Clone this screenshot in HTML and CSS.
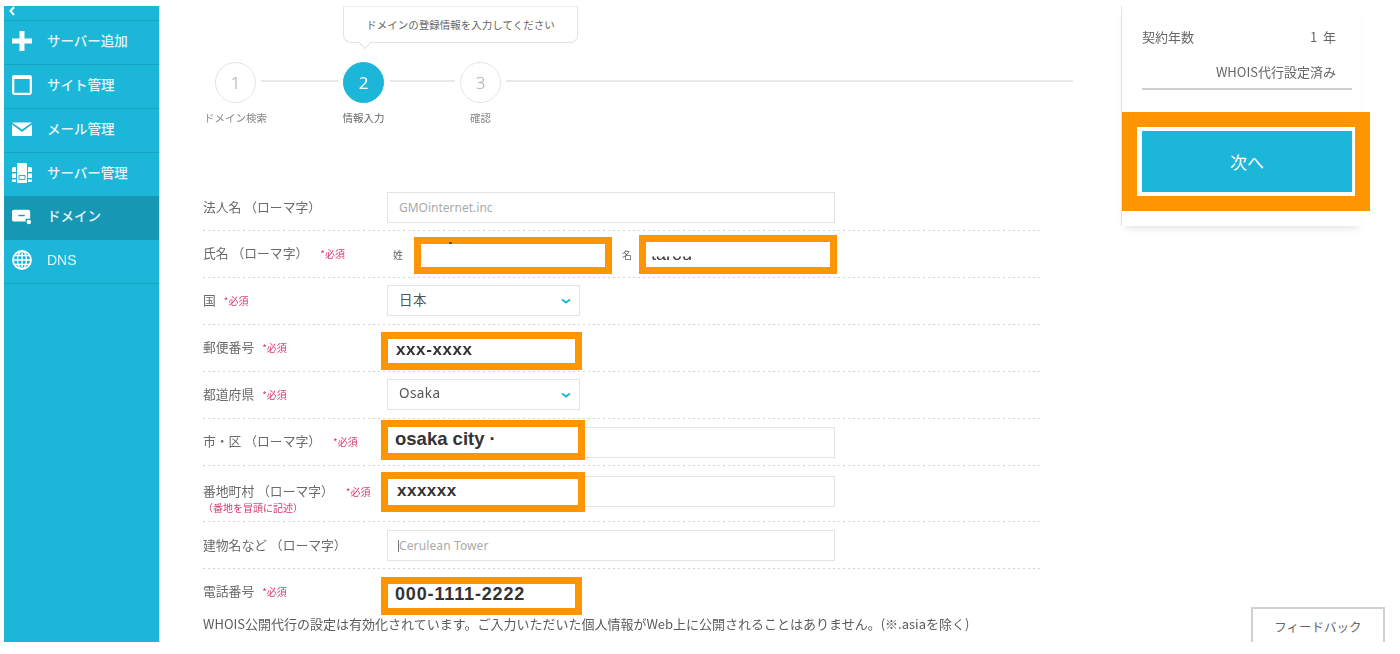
FILE: index.html
```html
<!DOCTYPE html>
<html lang="ja">
<head>
<meta charset="utf-8">
<title>ドメイン</title>
<link rel="stylesheet" href="styles.css">
</head>
<body>
<div class="stage">
  <nav class="sidebar">
    <div class="side-top"><svg class="back" viewBox="0 0 8 10" width="8" height="10"><path d="M6 1 2.500 5 6 9" fill="none" stroke="#fff" stroke-width="2"/></svg></div>
    <a class="side-item"><svg class="ico" viewBox="0 0 20 20"><path d="M7.500 0h5v7.500H20v5h-7.500V20h-5v-7.500H0v-5h7.500z" fill="#fff"/></svg><span>サーバー追加</span></a>
    <a class="side-item"><svg class="ico" viewBox="0 0 20 20"><rect x="1.200" y="1.200" width="17.600" height="17.600" rx="1" fill="none" stroke="#fff" stroke-width="2.200"/><path d="M1 1h18v3H1z" fill="#fff"/></svg><span>サイト管理</span></a>
    <a class="side-item"><svg class="ico" viewBox="0 0 20 20"><path d="M0 3.500h20L10 10.500zM0 5.500 10 13l10-7.500V17H0z" fill="#fff"/></svg><span>メール管理</span></a>
    <a class="side-item"><svg class="ico" viewBox="0 0 20 20"><path d="M6 0h8a1 1 0 0 1 1 1v18a1 1 0 0 1-1 1H6a1 1 0 0 1-1-1V1a1 1 0 0 1 1-1z" fill="#fff"/><path d="M1.500 4H4v5H0V5.500A1.500 1.500 0 0 1 1.500 4zM0 10.500h4V15H0zM0 16.500h4V19H1.500A1.500 1.500 0 0 1 0 17.500zM16 4h2.500A1.500 1.500 0 0 1 20 5.500V9h-4zM16 10.500h4V15h-4zM16 16.500h4v1a1.500 1.500 0 0 1-1.500 1.500H16z" fill="#fff"/><path d="M7 12.500h6v4H7z" fill="none" stroke="#1bb6d8"/></svg><span>サーバー管理</span></a>
    <a class="side-item active"><svg class="ico" viewBox="0 0 22 20"><path d="M2 3h16a2 2 0 0 1 2 2v8h-5v3H2a2 2 0 0 1-2-2V5a2 2 0 0 1 2-2z" fill="#fff"/><path d="M7 9.500h7" stroke="#1697b3" stroke-width="1.500"/><circle cx="18.500" cy="16.500" r="2.500" fill="#fff"/></svg><span>ドメイン</span></a>
    <a class="side-item"><svg class="ico" viewBox="0 0 20 20"><circle cx="10" cy="10" r="9" fill="none" stroke="#fff" stroke-width="1.800"/><ellipse cx="10" cy="10" rx="4.500" ry="9" fill="none" stroke="#fff" stroke-width="1.300"/><path d="M10 1v18M1 10h18M2.500 5.500h15M2.500 14.500h15" stroke="#fff" stroke-width="1.300"/></svg><span class="dns">DNS</span></a>
  </nav>

  <main class="content">
    <section class="left">
      <div class="stepper">
        <div class="step"><div class="circle">1</div><div class="step-label">ドメイン検索</div></div>
        <div class="step-line line-a"></div>
        <div class="step">
          <div class="bubble">ドメインの登録情報を入力してください</div>
          <div class="circle current">2</div><div class="step-label current-label">情報入力</div>
        </div>
        <div class="step-line line-b"></div>
        <div class="step"><div class="circle">3</div><div class="step-label">確認</div></div>
        <div class="step-line line-c"></div>
      </div>

      <form class="form">
        <div class="row">
          <div class="label">法人名 （ローマ字）</div>
          <div class="input wide muted">GMOinternet.inc</div>
        </div>
        <div class="row">
          <div class="label">氏名 （ローマ字）<span class="req">*必須</span></div>
          <div class="name-field">
            <span class="mini mini-sei">姓</span>
            <div class="input name-input"><div class="mark mark-sei"><span class="speck"></span></div></div>
            <span class="mini mini-mei">名</span>
            <div class="input name-input"><div class="mark mark-mei"><span class="clipped">tarou</span></div></div>
          </div>
        </div>
        <div class="row">
          <div class="label">国<span class="req req-near">*必須</span></div>
          <div class="input narrow select">日本<svg class="chev" viewBox="0 0 10 6" width="10" height="6"><path d="M1 1.500 5 4.500 9 1.500" fill="none" stroke="#1bb6d8" stroke-width="2"/></svg></div>
        </div>
        <div class="row">
          <div class="label">郵便番号<span class="req req-near">*必須</span></div>
          <div class="input narrow"><div class="mark mark-zip">xxx-xxxx</div></div>
        </div>
        <div class="row">
          <div class="label">都道府県<span class="req req-near">*必須</span></div>
          <div class="input narrow select">Osaka<svg class="chev" viewBox="0 0 10 6" width="10" height="6"><path d="M1 1.500 5 4.500 9 1.500" fill="none" stroke="#1bb6d8" stroke-width="2"/></svg></div>
        </div>
        <div class="row">
          <div class="label">市・区 （ローマ字）<span class="req">*必須</span></div>
          <div class="input wide"><div class="mark mark-city">osaka city ·</div></div>
        </div>
        <div class="row row-tall">
          <div class="label">番地町村 （ローマ字）<span class="req">*必須</span><div class="note">（番地を冒頭に記述）</div></div>
          <div class="input wide"><div class="mark mark-addr">xxxxxx</div></div>
        </div>
        <div class="row">
          <div class="label">建物名など （ローマ字）</div>
          <div class="input wide muted cursor">Cerulean Tower</div>
        </div>
        <div class="row row-last">
          <div class="label">電話番号<span class="req req-near">*必須</span></div>
          <div class="input narrow"><div class="mark mark-tel">000-1111-2222</div></div>
        </div>
      </form>
      <p class="notice">WHOIS公開代行の設定は有効化されています。ご入力いただいた個人情報がWeb上に公開されることはありません。(※.asiaを除く)</p>
    </section>

    <aside class="panel">
      <div class="panel-row"><span>契約年数</span><span>1&nbsp;&nbsp;年</span></div>
      <div class="panel-whois">WHOIS代行設定済み</div>
      <div class="next-wrap">
        <div class="next-mark"></div>
        <button class="next" type="button">次へ</button>
      </div>
    </aside>
  </main>

  <div class="feedback">フィードバック</div>
</div>
</body>
</html>
```

FILE: styles.css
```css
* { box-sizing: border-box; }
html, body { margin: 0; height: 654px; overflow: hidden; background: #fff; }
body { font-family: "Noto Sans CJK JP", "Noto Sans", sans-serif; color: #666; }

.stage {
  position: relative;
  display: flex;
  height: 636px;
  margin: 6px 0 0 4px;
  overflow: hidden;
  filter: blur(0.55px);
}

/* sidebar */
.sidebar {
  flex: 0 0 156px;
  background: #1bb6d8;
  border-right: 1px solid #c9e6ee;
}
.side-top { height: 15px; border-bottom: 1px solid #16a3c2; padding-left: 4px; line-height: 8px; }
.back { display: block; }
.side-item {
  display: flex;
  align-items: center;
  height: 44px;
  padding: 0 0 3px 8px;
  border-bottom: 1px solid #16a3c2;
  color: #e4f6fb;
  font-size: 13.5px;
  font-weight: 500;
}
.side-item span { margin: 0 0 3px 15px; }
.side-item .dns { font-family: "Liberation Sans", sans-serif; font-size: 14px; margin: 0 0 1px 15px; }
.side-item.active { background: #1697b3; border-bottom-color: #1697b3; margin-top: -1px; }
.ico { width: 20px; height: 20px; flex: none; }

/* main */
.content { flex: 1; display: flex; padding-left: 43px; min-width: 0; }
.left { flex: 0 0 918px; }

.stepper { display: flex; align-items: flex-start; padding: 56px 0 0 12px; height: 178px; }
.step { position: relative; width: 41px; display: flex; flex-direction: column; align-items: center; flex: none; }
.circle {
  width: 41px; height: 41px;
  border: 1.5px solid #e3e3e3;
  border-radius: 50%;
  display: flex; align-items: center; justify-content: center;
  font-size: 17px; font-weight: 300; color: #aaa;
  font-family: "Noto Sans", sans-serif;
}
.circle.current { background: #1bb6d8; border-color: #1bb6d8; color: #fff; font-weight: 400; }
.step-label { margin-top: 7px; font-size: 10.5px; color: #888; white-space: nowrap; line-height: 16px; }
.current-label { color: #666; }
.step-line { height: 2px; background: #e8e8e8; margin-top: 18px; flex: none; }
.line-a { width: 77px; margin-left: 5px; margin-right: 5px; }
.line-b { width: 65px; margin-left: 6px; margin-right: 5px; }
.line-c { width: 567px; margin-left: 5px; }

.bubble {
  position: absolute;
  left: 0; top: -56px;
  width: 235px; height: 37px;
  border: 1px solid #e2e2e2;
  border-top-color: #eee;
  border-radius: 0 0 8px 8px;
  background: #fff;
  font-size: 10.5px;
  color: #666;
  white-space: nowrap;
  text-align: center;
  line-height: 36px;
}
.bubble::after {
  content: "";
  position: absolute;
  left: 16px; bottom: -5px;
  width: 9px; height: 9px;
  background: #fff;
  border-right: 1px solid #e2e2e2;
  border-bottom: 1px solid #e2e2e2;
  transform: rotate(45deg);
}

/* form */
.form { width: 837px; }
.row {
  display: grid;
  grid-template-columns: 184px 1fr;
  align-items: center;
  height: 47px;
  background-image: linear-gradient(90deg, #d4d4d4 2px, transparent 2px);
  background-size: 5px 1px;
  background-repeat: repeat-x;
  background-position: 0 100%;
  font-size: 12.8px;
}
.row-tall { height: 56px; align-items: start; padding-top: 10px; }
.row-last { background-image: none; }
.label { white-space: nowrap; color: #6a6a6a; line-height: 18px; margin-top: -2px; }
.row-tall .label { padding-top: 6px; line-height: 17px; margin-top: 0; }
.req { color: #d83a72; font-size: 10px; margin-left: 12px; }
.req-near { margin-left: 8px; }
.note { color: #d83a72; font-size: 10px; line-height: 14px; margin-top: 1px; }

.input {
  position: relative;
  display: flex; align-items: center;
  height: 31px;
  border: 1px solid #e3e3e3;
  background: #fff;
  padding: 0 11px;
  font-size: 12px;
  font-family: "Noto Sans", "Noto Sans CJK JP", sans-serif;
  color: #555;
}
.wide { width: 448px; }
.narrow { width: 193px; }
.muted { color: #aaa; }
.cursor { padding-left: 10px; letter-spacing: .12px; }
.cursor::before { content: ""; width: 1px; height: 12px; background: #777; margin-right: 0; flex: none; }
.select {
  font-size: 13.5px;
  letter-spacing: .4px;
  justify-content: space-between;
  padding: 0 8px 3px 11px;
  margin-top: -2px;
}
.chev { flex: none; margin-top: 4px; }

.name-field { display: flex; align-items: center; padding-left: 6px; }
.mini { font-size: 10px; width: 10px; flex: none; }
.mini-sei { margin-right: 17px; }
.mini-mei { margin: 0 13px 0 16px; }
.name-input { width: 186px; flex: none; }

/* orange call-outs lying over the fields */
.mark {
  position: absolute;
  display: flex; align-items: center;
  border: 7px solid #ff9500;
  background: #fff;
  color: #333;
  font-family: "Liberation Sans", sans-serif;
  font-weight: 700;
  font-size: 17px;
  white-space: nowrap;
  padding-bottom: 3px;
}
.mark-sei { left: -7px; right: -7px; top: -3px; bottom: -5px; }
.mark-mei { left: -7px; right: -7px; top: -5px; bottom: -5px; padding: 0 0 0 5px; font-size: 18px; font-weight: 400; }
.mark-zip { left: -7px; right: -3px; top: -2px; bottom: -7px; padding-left: 8px; letter-spacing: .6px; }
.mark-city { left: -7px; width: 204px; top: -8px; bottom: -3px; padding-left: 7px; font-size: 18.5px; }
.mark-addr { left: -7px; width: 204px; top: -5px; bottom: -6px; padding-left: 9px; letter-spacing: .5px; }
.mark-tel { left: -7px; right: -3px; top: -1px; bottom: -8px; padding-left: 7px; font-size: 18px; letter-spacing: .85px; }
.clipped { clip-path: inset(60% 0 0 0); }
.speck { width: 3px; height: 2px; background: #555; margin: -22px 0 0 28px; }

.notice { margin: -1px 0 0; font-size: 13px; color: #5c5c5c; line-height: 18px; white-space: nowrap; }

/* right panel */
.panel {
  width: 240px;
  height: 220px;
  flex: none;
  border-left: 1px solid #e2e2e2;
  box-shadow: 0 6px 8px -4px rgba(0,0,0,.12);
  padding: 0 0 0 20px;
  font-size: 13px;
}
.panel-row { display: flex; justify-content: space-between; width: 194px; padding-top: 21px; line-height: 20px; }
.panel-whois { width: 194px; text-align: right; margin-top: 15px; line-height: 20px; white-space: nowrap; }
.next-wrap { position: relative; width: 210px; height: 61px; margin-top: 41px; }
.panel-whois::after {
  content: "";
  display: block;
  width: 210px; height: 2px;
  margin-top: 6px;
  background: #cfcfcf;
}
.next {
  position: relative;
  display: block;
  width: 100%; height: 100%;
  border: 0;
  background: #1bb6d8;
  color: #fff;
  font-family: inherit;
  font-size: 17px;
  padding: 0 0 0 0;
}
.next-mark {
  position: absolute;
  left: -20px; right: -18px; top: -19px; bottom: -19px;
  border: 15px solid #ff9500;
  background: #fff;
}

.feedback {
  position: absolute;
  left: 1247px; top: 601px;
  width: 134px; height: 50px;
  border: 2px solid #d0d0d0;
  background: #fff;
  text-align: center;
  font-size: 12.5px;
  line-height: 35px;
  color: #666;
}
```
